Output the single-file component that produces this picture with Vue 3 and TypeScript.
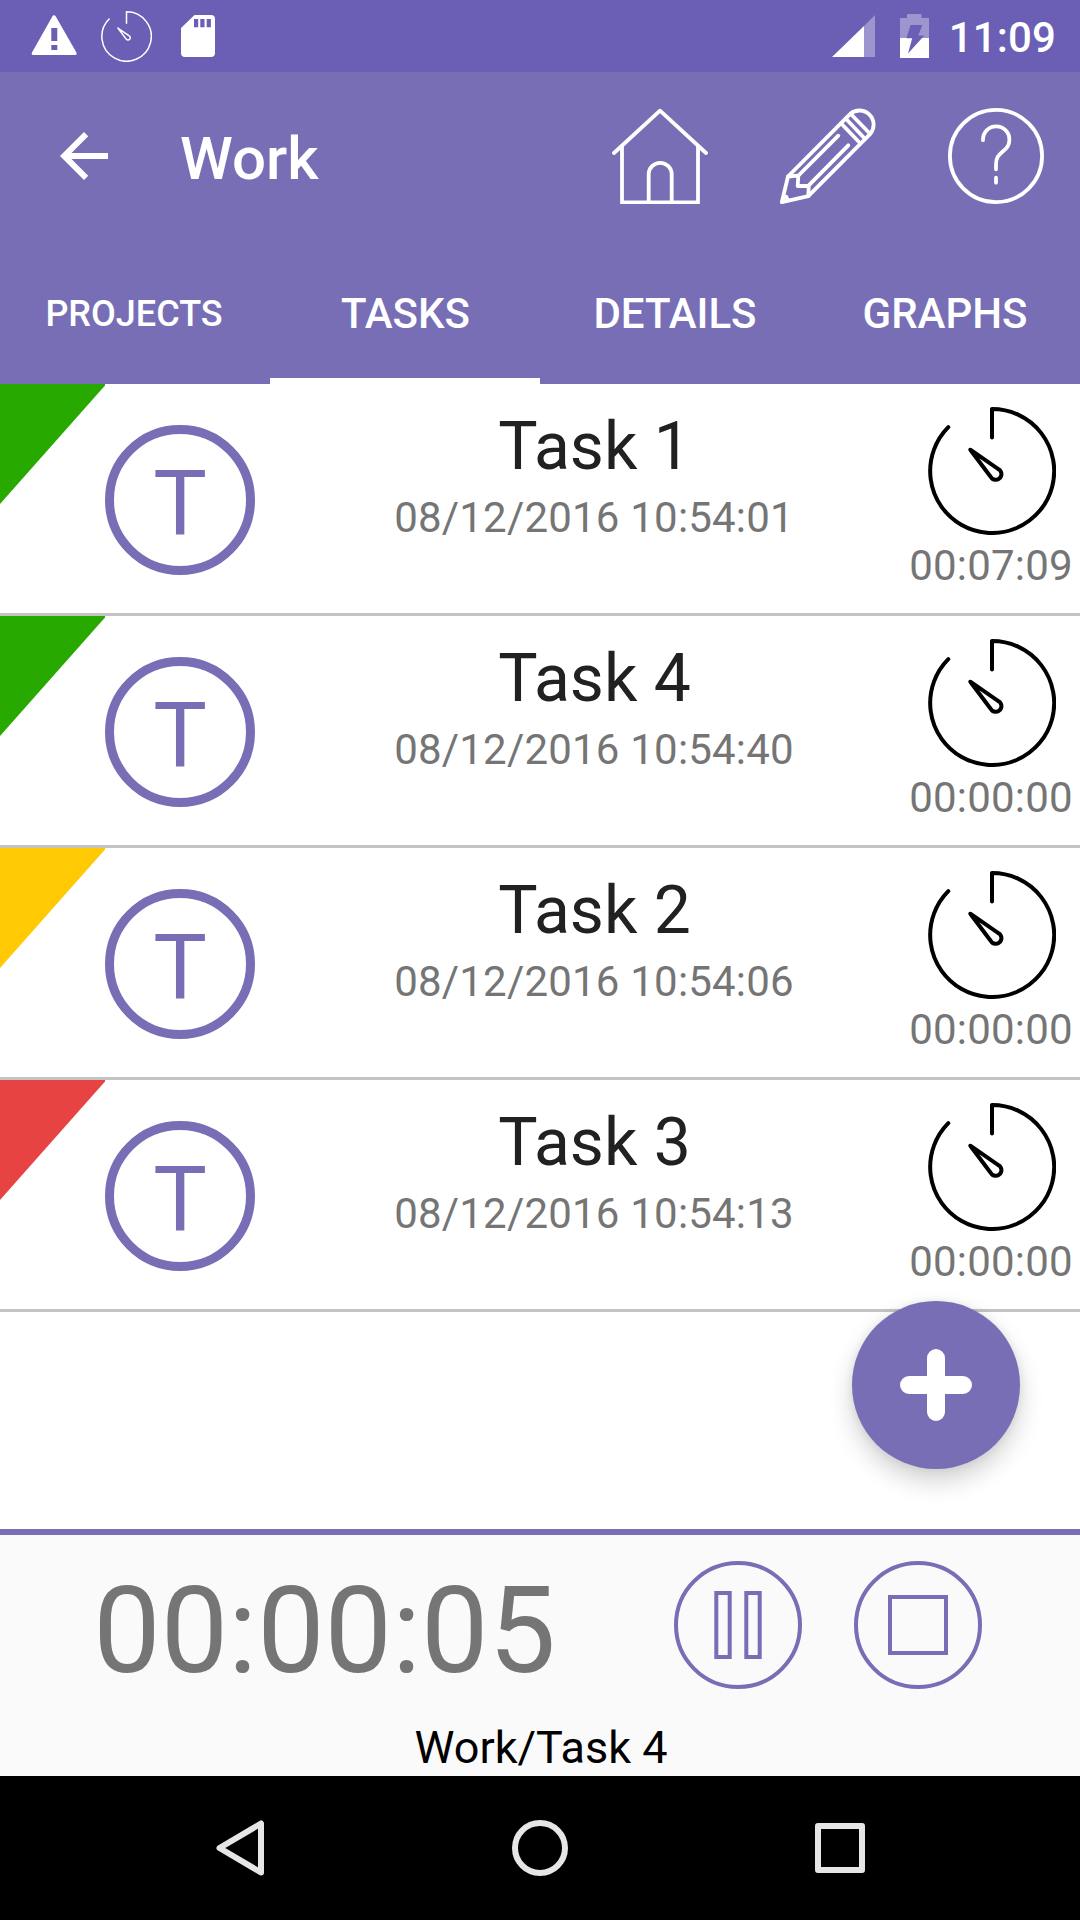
<script setup lang="ts">
interface Task {
  name: string
  created: string
  elapsed: string
  priority: 'low' | 'medium' | 'high'
}

const tabs: string[] = ['PROJECTS', 'TASKS', 'DETAILS', 'GRAPHS']
const activeTab = 'TASKS'

const tasks: Task[] = [
  { name: 'Task 1', created: '08/12/2016 10:54:01', elapsed: '00:07:09', priority: 'low' },
  { name: 'Task 4', created: '08/12/2016 10:54:40', elapsed: '00:00:00', priority: 'low' },
  { name: 'Task 2', created: '08/12/2016 10:54:06', elapsed: '00:00:00', priority: 'medium' },
  { name: 'Task 3', created: '08/12/2016 10:54:13', elapsed: '00:00:00', priority: 'high' },
]
</script>

<template>
  <div class="screen">
    <div class="status">
      <div class="status-left">
        <svg class="warn" width="46" height="42" viewBox="0 0 46 42">
          <path fill="#fff" fill-rule="evenodd" d="M23 1.2Q24 1.2 24.8 2.6L45.4 38.4Q46.2 41 44.2 41H2.2Q0 41 1 38.4L21.3 2.6Q22 1.2 23 1.2ZM20.3 14V27H26.3V14ZM20.3 31V36H26.3V31Z" />
        </svg>
        <svg class="mini-timer" width="51" height="51" viewBox="0 0 128 128" fill="none" stroke="#fff" stroke-width="3.8" stroke-linecap="round" stroke-linejoin="round">
          <path d="M64 30.5V2A62 62 0 1 1 20.3 20.2" />
          <path d="M42.3 42.7L70 61.9A5.7 5.7 0 1 1 62.8 70Z" />
        </svg>
        <svg class="card" width="34" height="42" viewBox="0 0 34 42">
          <path fill="#fff" fill-rule="evenodd" d="M13.5 0H30Q34 0 34 4V38Q34 42 30 42H4Q0 42 0 38V13ZM13 4V12.3H17.2V4ZM19.3 4V12.3H23.5V4ZM25.7 4V12.3H29.9V4Z" />
        </svg>
      </div>
      <div class="status-right">
        <svg width="43" height="42" viewBox="0 0 43 42">
          <path fill="#9d95cd" d="M32 11V42H43V0Z" />
          <path fill="#fff" d="M0 42H32V11Z" />
        </svg>
        <svg class="battery" width="29" height="44" viewBox="0 0 29 44">
          <path fill="#9d95cd" d="M7 0H21.5V4H29V24H0V4H7Z" />
          <path fill="#fff" d="M0 24H29V44H0Z" />
          <path fill="#6a5fb4" d="M10.5 11H22.3L18.3 21.5H24.3L8 39.5L12.2 24.3H6.5Z" />
        </svg>
        <span class="clock">11:09</span>
      </div>
    </div>

    <header class="toolbar">
      <svg width="72" height="72" viewBox="0 0 24 24" fill="#fff">
        <path d="M20 11H7.83l5.59-5.59L12 4l-8 8 8 8 1.41-1.41L7.83 13H20v-2z" />
      </svg>
      <h1>Work</h1>
      <div class="actions">
        <svg width="96" height="96" viewBox="0 0 96 96" class="line">
          <path d="M2 45L48 2.7L94 45" />
          <path stroke-linejoin="miter" d="M10 39V94.3H86V39" />
          <path d="M36.7 94V66.3A11.5 11.5 0 0 1 59.7 66.3V94" />
        </svg>
        <svg width="96" height="96" viewBox="0 0 96 96" class="line">
          <path d="M8 68.5L70.3 5.8A14.2 14.2 0 0 1 90.3 25.8L28.3 88.2L1.8 94.2Z" />
          <path d="M61 15.3L79.7 34.7M65.7 10.5L84.2 30M70.8 6L89.3 25" />
          <path d="M58.3 27.7L18 68M68.3 37.3L28.3 77.8" />
          <path d="M8 68.5L18.3 67.7L17.7 78L28.7 78L28.3 88.2" />
          <path d="M3.5 90L6.3 88.8L7.5 91.5" />
        </svg>
        <svg width="96" height="96" viewBox="0 0 96 96" class="line">
          <circle cx="48" cy="48" r="46.1" />
          <path d="M35 32.2V31.5A13.1 13.1 0 0 1 61.4 31.5C61.4 37.5 58.8 40 55 43.2C50.4 47.2 48 50 48 56V61.3M48 69.7V74.7" />
        </svg>
      </div>
    </header>

    <nav class="tabs">
      <div v-for="tab in tabs" :key="tab" class="tab" :class="{ active: tab === activeTab, small: tab === 'PROJECTS' }">{{ tab }}</div>
    </nav>

    <main class="list">
      <article v-for="task in tasks" :key="task.name" class="row">
        <div class="badge-col">
          <svg class="corner" :class="task.priority" width="105" height="120" viewBox="0 0 105 120">
            <path d="M0 0H105V1.5L0 120Z" />
          </svg>
          <div class="badge">T</div>
        </div>
        <div class="info">
          <div class="name">{{ task.name }}</div>
          <div class="date">{{ task.created }}</div>
        </div>
        <div class="timer">
          <svg width="128" height="128" viewBox="0 0 128 128" fill="none" stroke="#000" stroke-width="4" stroke-linecap="round" stroke-linejoin="round">
            <path d="M64 30.5V2A62 62 0 1 1 20.3 20.2" />
            <path d="M42.3 42.7L70 61.9A5.7 5.7 0 1 1 62.8 70Z" />
          </svg>
          <div class="elapsed">{{ task.elapsed }}</div>
        </div>
      </article>
      <button class="fab" type="button" aria-label="Add task">
        <svg width="72" height="72" viewBox="0 0 72 72" fill="none" stroke="#fff" stroke-width="18" stroke-linecap="round">
          <path d="M36 9V63M9 36H63" />
        </svg>
      </button>
    </main>

    <section class="player">
      <div class="controls">
        <div class="total">00:00:05</div>
        <svg width="128" height="128" viewBox="0 0 128 128" class="control">
          <circle cx="64" cy="64" r="62" />
          <path d="M42.3 32H55.7V96H42.3ZM72.3 32H85.7V96H72.3Z" />
        </svg>
        <svg width="128" height="128" viewBox="0 0 128 128" class="control stop">
          <circle cx="64" cy="64" r="62" />
          <path d="M36 36H92V92H36Z" />
        </svg>
      </div>
      <div class="current">Work/Task 4</div>
    </section>

    <footer class="navbar">
      <svg width="144" height="144" viewBox="0 0 144 144">
        <path d="M51.5 72L93 47.5V96.5Z" />
      </svg>
      <svg width="144" height="144" viewBox="0 0 144 144">
        <circle cx="72" cy="72" r="25" />
      </svg>
      <svg width="144" height="144" viewBox="0 0 144 144">
        <rect x="50" y="50" width="44" height="44" />
      </svg>
    </footer>
  </div>
</template>

<style>
body {
  margin: 0;
}
</style>

<style scoped>
.screen {
  width: 1080px;
  height: 1920px;
  display: flex;
  flex-direction: column;
  overflow: hidden;
  background: #fff;
  font-family: Roboto, "Liberation Sans", sans-serif;
}
svg {
  display: block;
  flex: none;
}
.status {
  height: 72px;
  display: flex;
  justify-content: space-between;
  background: #6a5fb4;
  color: #fff;
}
.status-left,
.status-right {
  display: flex;
  align-items: center;
}
.status-left {
  padding-left: 30.5px;
}
.warn {
  margin-bottom: 2px;
}
.mini-timer {
  margin-left: 24px;
}
.card {
  margin-left: 29.5px;
}
.status-right {
  padding-right: 24px;
}
.battery {
  margin-left: 25px;
}
.clock {
  margin-left: 20px;
  padding-top: 3px;
  font-size: 42px;
  font-weight: 500;
  line-height: 50px;
  letter-spacing: 0.15px;
}
.toolbar {
  height: 168px;
  padding: 0 36px 0 48px;
  box-sizing: border-box;
  display: flex;
  align-items: center;
  background: #776eb5;
  color: #fff;
}
h1 {
  margin: 0 0 0 60px;
  padding-top: 5px;
  font-size: 60px;
  font-weight: 500;
  line-height: 70px;
}
.actions {
  margin-left: auto;
  display: flex;
  gap: 72px;
}
.line {
  fill: none;
  stroke: #fff;
  stroke-width: 3.8;
  stroke-linecap: round;
  stroke-linejoin: round;
}
.tabs {
  height: 144px;
  display: flex;
  background: #776eb5;
  color: #fff;
}
.tab {
  width: 270px;
  box-sizing: border-box;
  padding-top: 3px;
  font-size: 42px;
  font-weight: 500;
  line-height: 141px;
  text-align: center;
}
.tab.small {
  padding-top: 4px;
  padding-right: 2px;
  font-size: 36px;
}
.tab.active {
  padding-left: 1px;
  border-bottom: 6px solid #fff;
}
.list {
  flex: 1;
  position: relative;
}
.row {
  height: 232px;
  box-sizing: border-box;
  border-bottom: 3px solid #c4c4c4;
  display: flex;
}
.badge-col {
  position: relative;
  width: 360px;
  display: flex;
  justify-content: center;
}
.corner {
  position: absolute;
  left: 0;
  top: 0;
}
.corner.low {
  fill: #28a900;
}
.corner.medium {
  fill: #ffc903;
}
.corner.high {
  fill: #e84343;
}
.badge {
  width: 150px;
  height: 150px;
  margin-top: 41px;
  box-sizing: border-box;
  border: 9px solid #776eb5;
  border-radius: 50%;
  color: #776eb5;
  font-size: 90px;
  line-height: 142px;
  text-align: center;
}
.info {
  width: 469px;
  padding-top: 24px;
  text-align: center;
}
.name {
  color: #212121;
  font-size: 66px;
  line-height: 78px;
}
.date {
  margin-top: 7px;
  margin-right: 1px;
  color: #757575;
  font-size: 42px;
  line-height: 50px;
  letter-spacing: 0.2px;
}
.timer {
  width: 180px;
  margin-left: auto;
  padding-top: 23px;
  display: flex;
  flex-direction: column;
  align-items: center;
  margin-right: -2px;
}
.elapsed {
  margin-top: 6px;
  margin-right: 2px;
  color: #757575;
  font-size: 42px;
  line-height: 50px;
  letter-spacing: 0.2px;
}
.fab {
  position: absolute;
  right: 60px;
  bottom: 60px;
  width: 168px;
  height: 168px;
  padding: 0;
  border: 0;
  border-radius: 50%;
  display: flex;
  align-items: center;
  justify-content: center;
  background: #776eb5;
  box-shadow: 0 12px 24px rgba(0, 0, 0, 0.18), 0 0 8px rgba(0, 0, 0, 0.08);
}
.player {
  height: 247px;
  box-sizing: border-box;
  border-top: 6px solid #776eb5;
  background: #fafafa;
}
.controls {
  display: flex;
  padding-top: 26px;
}
.total {
  width: 556px;
  height: 128px;
  margin-right: 118px;
  color: #757575;
  font-size: 120px;
  line-height: 140px;
  text-align: right;
}
.control {
  fill: none;
  stroke: #776eb5;
  stroke-width: 4;
}
.control.stop {
  margin-left: 52px;
}
.current {
  margin-top: 32px;
  padding-left: 2px;
  color: #000;
  font-size: 45px;
  line-height: 54px;
  text-align: center;
}
.navbar {
  height: 144px;
  display: flex;
  justify-content: center;
  gap: 156px;
  background: #000;
}
.navbar svg {
  fill: none;
  stroke: #e6e6e6;
  stroke-width: 6;
  stroke-linejoin: round;
}
</style>
